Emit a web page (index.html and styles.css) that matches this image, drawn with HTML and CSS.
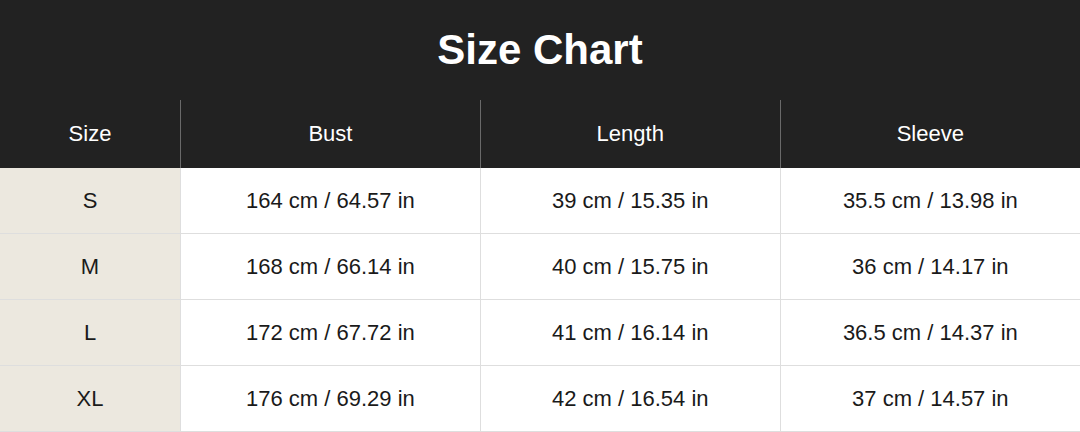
FILE: index.html
```html
<!DOCTYPE html>
<html>
<head>
<meta charset="utf-8">
<link rel="stylesheet" href="styles.css">
</head>
<body>
<div class="chart">
  <h1 class="title">Size Chart</h1>
  <table class="table">
    <thead>
      <tr><th class="c-size">Size</th><th>Bust</th><th>Length</th><th>Sleeve</th></tr>
    </thead>
    <tbody>
      <tr><td class="c-size">S</td><td>164 cm / 64.57 in</td><td>39 cm / 15.35 in</td><td>35.5 cm / 13.98 in</td></tr>
      <tr><td class="c-size">M</td><td>168 cm / 66.14 in</td><td>40 cm / 15.75 in</td><td>36 cm / 14.17 in</td></tr>
      <tr><td class="c-size">L</td><td>172 cm / 67.72 in</td><td>41 cm / 16.14 in</td><td>36.5 cm / 14.37 in</td></tr>
      <tr><td class="c-size">XL</td><td>176 cm / 69.29 in</td><td>42 cm / 16.54 in</td><td>37 cm / 14.57 in</td></tr>
    </tbody>
  </table>
</div>
</body>
</html>
```
FILE: styles.css
```css
html, body {
  margin: 0;
  padding: 0;
  background: #ffffff;
}
body {
  font-family: "Liberation Sans", Arial, sans-serif;
  color: #1a1a1a;
}
.chart {
  width: 1080px;
}
.title {
  margin: 0;
  height: 100px;
  line-height: 100px;
  background: #222222;
  color: #ffffff;
  font-size: 42px;
  font-weight: bold;
  text-align: center;
}
.table {
  width: 1080px;
  border-collapse: collapse;
  table-layout: fixed;
}
.table th {
  background: #222222;
  color: #ffffff;
  font-weight: normal;
  font-size: 22px;
  height: 68px;
  padding: 0;
  text-align: center;
  vertical-align: middle;
  border-left: 1px solid #6a6a6a;
}
.table th:first-child {
  border-left: none;
}
.table th.c-size {
  width: 180px;
}
.table td {
  font-size: 22px;
  height: 65px;
  padding: 0;
  text-align: center;
  vertical-align: middle;
  border-bottom: 1px solid #dedede;
  border-left: 1px solid #dedede;
}
.table td:first-child {
  border-left: none;
}
.table td.c-size {
  background: #ece8df;
}
```
